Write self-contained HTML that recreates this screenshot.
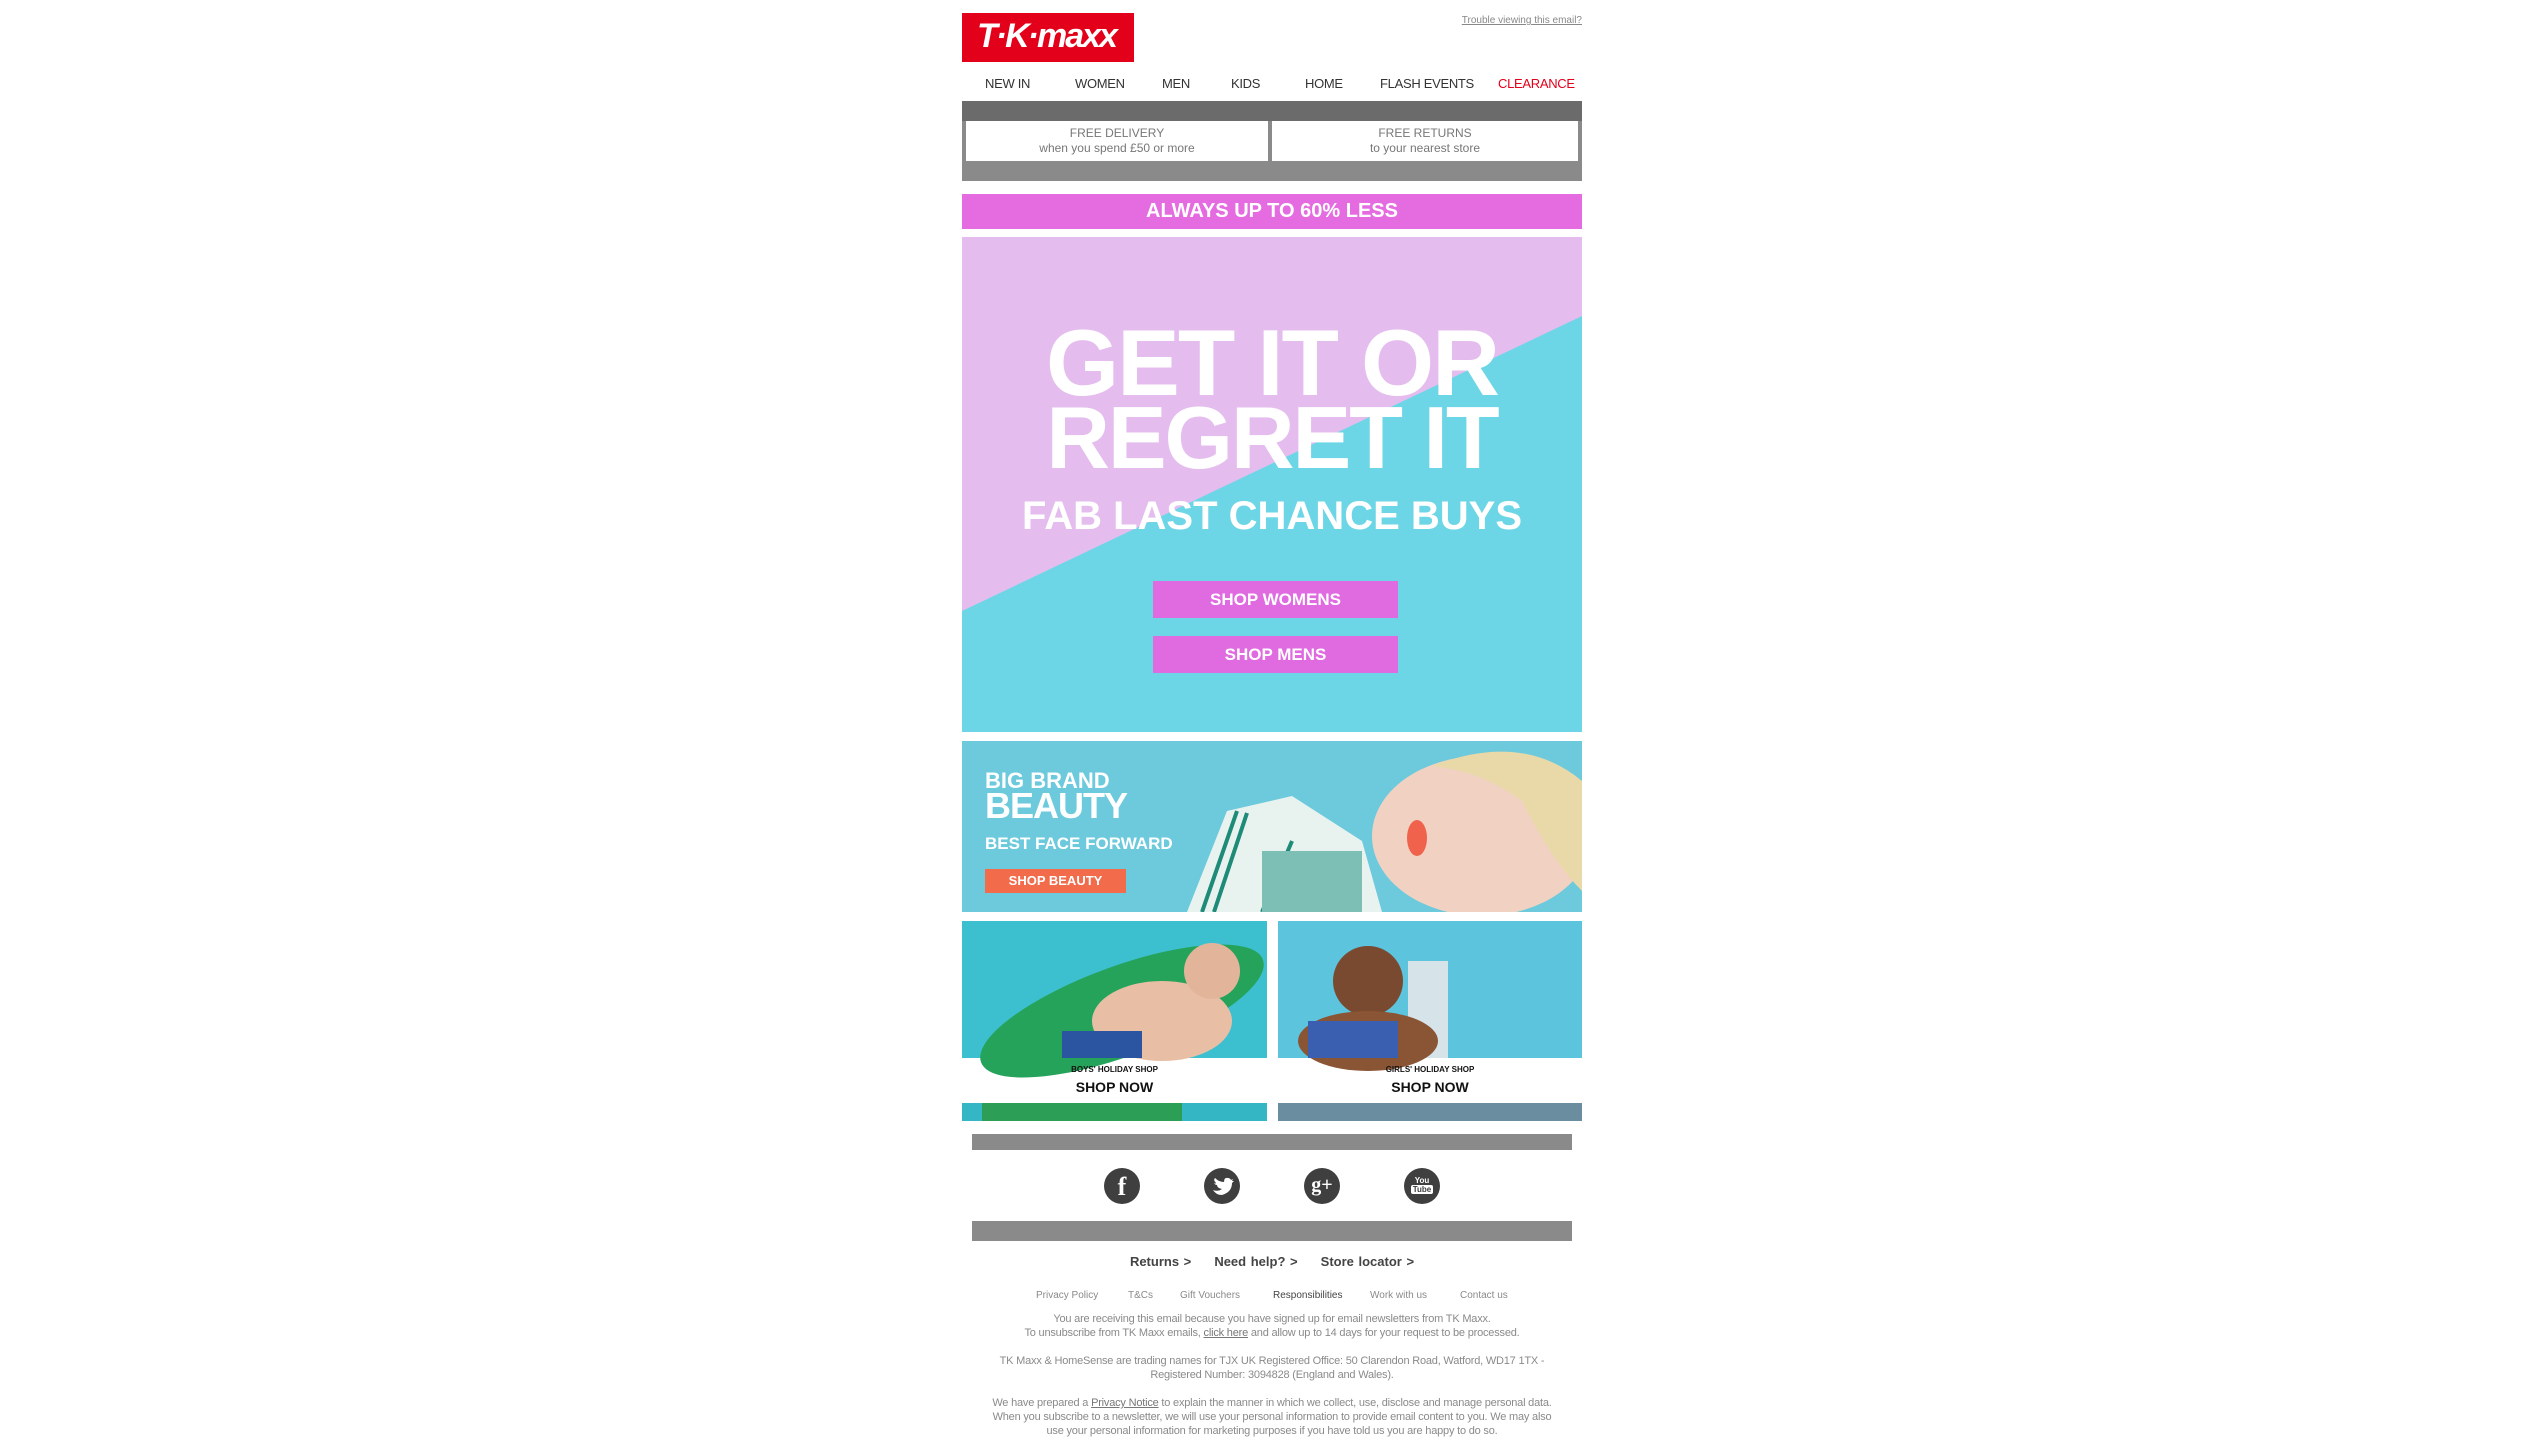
<!DOCTYPE html>
<html><head><meta charset="utf-8">
<style>
*{margin:0;padding:0;box-sizing:border-box}
body{width:2543px;height:1454px;background:#fff;position:relative;font-family:"Liberation Sans",Arial,sans-serif;overflow:hidden}
.a{position:absolute}
.nav{top:76px;font-size:13px;color:#333;letter-spacing:-0.3px}
.c{text-align:center}
.ft{color:#8a8a8a;font-size:11px;line-height:14px;left:962px;width:620px;text-align:center;letter-spacing:-0.2px}
.ft u{color:#777}
.ico{width:36px;height:36px;border-radius:50%;background:#3f3f3f;top:1168px;color:#fff;font-weight:bold;text-align:center}
.hb{color:#fff;font-weight:bold;letter-spacing:-2px;text-align:center;left:962px;width:620px}
.btn{background:#e06ae0;color:#fff;font-weight:bold;font-size:17px;text-align:center;left:1153px;width:245px;height:37px;line-height:37px}
</style></head><body>
<!-- logo -->
<div class="a" style="left:962px;top:13px;width:172px;height:49px;background:#e2001a;color:#fff;font-weight:bold;font-size:34px;line-height:47px;padding-left:15px;letter-spacing:-2px;font-style:italic">T·K·maxx</div>
<div class="a" style="right:961px;top:15px;font-size:10px;color:#888;text-decoration:underline">Trouble viewing this email?</div>
<div class="a nav" style="left:985px">NEW IN</div>
<div class="a nav" style="left:1075px">WOMEN</div>
<div class="a nav" style="left:1162px">MEN</div>
<div class="a nav" style="left:1231px">KIDS</div>
<div class="a nav" style="left:1305px">HOME</div>
<div class="a nav" style="left:1380px">FLASH EVENTS</div>
<div class="a nav" style="left:1498px;color:#e2001a">CLEARANCE</div>
<!-- delivery -->
<div class="a" style="left:962px;top:101px;width:620px;height:20px;background:#6b6b6b"></div>
<div class="a" style="left:962px;top:121px;width:620px;height:60px;background:#8a8a8a"></div>
<div class="a c" style="left:966px;top:121px;width:302px;height:40px;background:#fff;color:#777;font-size:12px;line-height:15px;padding-top:5px">FREE DELIVERY<br>when you spend £50 or more</div>
<div class="a c" style="left:1272px;top:121px;width:306px;height:40px;background:#fff;color:#777;font-size:12px;line-height:15px;padding-top:5px">FREE RETURNS<br>to your nearest store</div>
<!-- pink bar -->
<div class="a c" style="left:962px;top:194px;width:620px;height:35px;background:#e56ce0;color:#fff;font-weight:bold;font-size:20px;line-height:35px">ALWAYS UP TO 60% LESS</div>
<!-- hero -->
<svg class="a" style="left:962px;top:237px" width="620" height="495"><rect width="620" height="495" fill="#6dd6e6"/><polygon points="0,0 620,0 620,79 0,374" fill="#e4bdee"/></svg>
<div class="a hb" style="top:313px;font-size:94px;line-height:100px">GET IT OR</div>
<div class="a hb" style="top:393px;font-size:88px;line-height:90px">REGRET IT</div>
<div class="a hb" style="top:492px;font-size:40px;line-height:48px;letter-spacing:0">FAB LAST CHANCE BUYS</div>
<div class="a btn" style="top:581px">SHOP WOMENS</div>
<div class="a btn" style="top:636px">SHOP MENS</div>
<!-- beauty -->
<svg class="a" style="left:962px;top:741px" width="620" height="171"><rect width="620" height="171" fill="#6ccadc"/>
<polygon points="225,171 265,70 330,55 400,100 420,171" fill="#e8f3f0"/>
<path d="M240,171 L275,70 M252,171 L285,72 M300,171 L330,100" stroke="#1e8a78" stroke-width="4"/>
<rect x="300" y="110" width="100" height="61" fill="#7dbfb4"/>
<ellipse cx="520" cy="95" rx="110" ry="80" fill="#f1d2c2"/>
<path d="M470,25 Q560,-10 620,40 L620,150 Q590,120 560,60 Q520,30 470,25Z" fill="#e9d8a8"/>
<ellipse cx="455" cy="97" rx="10" ry="18" fill="#f0624c"/></svg>
<div class="a" style="left:985px;top:770px;color:#fff;font-weight:bold;font-size:22px;line-height:22px">BIG BRAND</div>
<div class="a" style="left:985px;top:788px;color:#fff;font-weight:bold;font-size:36px;line-height:36px;letter-spacing:-1px">BEAUTY</div>
<div class="a" style="left:985px;top:834px;color:#fff;font-weight:bold;font-size:17px">BEST FACE FORWARD</div>
<div class="a c" style="left:985px;top:869px;width:141px;height:24px;background:#f26b4b;color:#fff;font-weight:bold;font-size:13px;line-height:24px">SHOP BEAUTY</div>
<!-- kids -->
<svg class="a" style="left:962px;top:921px" width="305" height="200"><rect width="305" height="137" fill="#3cc0d0"/>
<ellipse cx="160" cy="90" rx="150" ry="45" fill="#26a35a" transform="rotate(-20 160 90)"/>
<ellipse cx="200" cy="100" rx="70" ry="40" fill="#e8bfa5"/><circle cx="250" cy="50" r="28" fill="#e2b59a"/>
<rect x="100" y="110" width="80" height="27" fill="#2b55a0"/>
<rect y="182" width="305" height="18" fill="#35b6c4"/><rect x="20" y="182" width="200" height="18" fill="#2c9e55"/></svg>
<svg class="a" style="left:1278px;top:921px" width="304" height="200"><rect width="304" height="137" fill="#5cc4dc"/>
<rect x="130" y="40" width="40" height="97" fill="#d6e4ea"/>
<circle cx="90" cy="60" r="35" fill="#7a4a30"/><ellipse cx="90" cy="120" rx="70" ry="30" fill="#8a5535"/>
<rect x="30" y="100" width="90" height="37" fill="#3a5fb0"/>
<rect y="182" width="304" height="18" fill="#6a8ea0"/></svg>
<div class="a c" style="left:962px;top:1065px;width:305px;font-size:8px;font-weight:bold;color:#111">BOYS' HOLIDAY SHOP</div>
<div class="a c" style="left:962px;top:1079px;width:305px;font-size:14px;font-weight:bold;color:#111">SHOP NOW</div>
<div class="a c" style="left:1278px;top:1065px;width:304px;font-size:8px;font-weight:bold;color:#111">GIRLS' HOLIDAY SHOP</div>
<div class="a c" style="left:1278px;top:1079px;width:304px;font-size:14px;font-weight:bold;color:#111">SHOP NOW</div>
<!-- social -->
<div class="a" style="left:972px;top:1134px;width:600px;height:16px;background:#8a8a8a"></div>
<div class="a ico" style="left:1104px;font-size:26px;line-height:38px;font-family:'Liberation Serif',serif">f</div>
<div class="a ico" style="left:1204px"><svg width="36" height="36"><path d="M9,22 Q14,24 18,21 Q13,20 13,17 Q11,17 10,15 Q12,16 12,15 Q9,12 11,10 Q15,14 20,14 Q20,9 24,10 Q26,10 27,12 L29,11 L28,13 L30,13 L28,15 Q28,24 18,27 Q12,27 9,22Z" fill="#fff"/></svg></div>
<div class="a ico" style="left:1304px;font-size:20px;line-height:34px;font-family:'Liberation Serif',serif">g+</div>
<div class="a ico" style="left:1404px;font-size:8px;line-height:9px;padding-top:8px">You<br><span style="background:#fff;color:#3f3f3f;border-radius:2px;padding:0 2px">Tube</span></div>
<div class="a" style="left:972px;top:1221px;width:600px;height:20px;background:#8a8a8a"></div>
<!-- links -->
<div class="a c" style="left:962px;top:1254px;width:620px;font-size:13px;color:#444;font-weight:bold;word-spacing:1px">Returns &gt;&nbsp;&nbsp;&nbsp;&nbsp; Need help? &gt;&nbsp;&nbsp;&nbsp;&nbsp; Store locator &gt;</div>
<div class="a" style="top:1290px;left:1036px;font-size:10px;color:#8a8a8a">Privacy Policy</div>
<div class="a" style="top:1290px;left:1128px;font-size:10px;color:#8a8a8a">T&amp;Cs</div>
<div class="a" style="top:1290px;left:1180px;font-size:10px;color:#8a8a8a">Gift Vouchers</div>
<div class="a" style="top:1290px;left:1273px;font-size:10px;color:#444">Responsibilities</div>
<div class="a" style="top:1290px;left:1370px;font-size:10px;color:#8a8a8a">Work with us</div>
<div class="a" style="top:1290px;left:1460px;font-size:10px;color:#8a8a8a">Contact us</div>
<div class="a ft" style="top:1312px">You are receiving this email because you have signed up for email newsletters from TK Maxx.<br>To unsubscribe from TK Maxx emails, <u>click here</u> and allow up to 14 days for your request to be processed.</div>
<div class="a ft" style="top:1354px">TK Maxx &amp; HomeSense are trading names for TJX UK Registered Office: 50 Clarendon Road, Watford, WD17 1TX -<br>Registered Number: 3094828 (England and Wales).</div>
<div class="a ft" style="top:1396px">We have prepared a <u>Privacy Notice</u> to explain the manner in which we collect, use, disclose and manage personal data.<br>When you subscribe to a newsletter, we will use your personal information to provide email content to you. We may also<br>use your personal information for marketing purposes if you have told us you are happy to do so.</div>
</body></html>
